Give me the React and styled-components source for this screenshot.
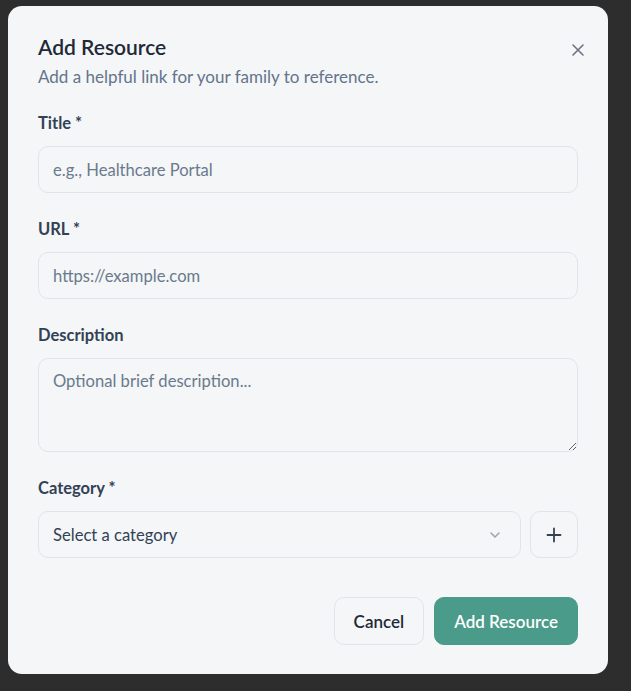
import React from 'react';
import styled, { createGlobalStyle } from 'styled-components';

const GlobalStyle = createGlobalStyle`
  html, body {
    margin: 0;
    padding: 0;
    background: #2d2d2d;
    font-family: Lato, "Open Sans", sans-serif;
  }
  * { box-sizing: border-box; }
`;

const Backdrop = styled.div`
  min-height: 691px;
  padding: 6px 23px 18px 8px;
  background: #2d2d2d;
`;

const Dialog = styled.div`
  position: relative;
  width: 600px;
  background: #f4f6f8;
  border-radius: 14px;
  padding: 28px 30px 29px;
`;

const CloseButton = styled.button`
  position: absolute;
  top: 34px;
  right: 20px;
  width: 20px;
  height: 20px;
  padding: 0;
  border: none;
  background: none;
  color: #6b7280;
  display: flex;
  align-items: center;
  justify-content: center;
`;

const Title = styled.h2`
  margin: 0;
  font-size: 21px;
  font-weight: 600;
  color: #1f2937;
  line-height: 26px;
`;

const Subtitle = styled.p`
  margin: 6px 0 0;
  font-size: 17px;
  color: #64748b;
  line-height: 22px;
`;

const Form = styled.form`
  display: flex;
  flex-direction: column;
  gap: 25px;
  margin-top: 24px;
`;

const Field = styled.div`
  display: flex;
  flex-direction: column;
  gap: 12px;
`;

const Label = styled.label`
  font-size: 16.5px;
  font-weight: 700;
  color: #334155;
  line-height: 22px;
`;

const Input = styled.input`
  height: 47px;
  width: 100%;
  padding: 0 14px;
  border: 1px solid #e1e5eb;
  border-radius: 10px;
  background: #f4f6f8;
  font: inherit;
  font-size: 16.6px;
  color: #334155;
  &::placeholder { color: #6b7a8c; }
`;

const TextArea = styled.textarea`
  height: 94px;
  width: 100%;
  padding: 12px 14px;
  border: 1px solid #e1e5eb;
  border-radius: 10px;
  background: #f4f6f8;
  font: inherit;
  font-size: 16.6px;
  resize: vertical;
  &::placeholder { color: #6b7a8c; }
`;

const SelectRow = styled.div`
  display: flex;
  gap: 9px;
`;

const Select = styled.div`
  flex: 1;
  height: 47px;
  display: flex;
  align-items: center;
  justify-content: space-between;
  padding: 0 18px 0 14px;
  border: 1px solid #e1e5eb;
  border-radius: 10px;
  font-size: 16.6px;
  color: #334155;
`;

const IconButton = styled.button`
  width: 48px;
  height: 47px;
  padding: 0;
  border: 1px solid #e1e5eb;
  border-radius: 10px;
  background: #f4f6f8;
  color: #374151;
  display: flex;
  align-items: center;
  justify-content: center;
`;

const Footer = styled.div`
  display: flex;
  justify-content: flex-end;
  gap: 10px;
  margin-top: 14px;
`;

const Button = styled.button`
  height: 48px;
  padding: 0 19px;
  border-radius: 10px;
  font: inherit;
  font-size: 17px;
  font-weight: 600;
  border: 1px solid ${p => (p.$primary ? '#4a9b8a' : '#e1e5eb')};
  background: ${p => (p.$primary ? '#4a9b8a' : '#f4f6f8')};
  color: ${p => (p.$primary ? '#ffffff' : '#1f2937')};
`;

export default function App() {
  return (
    <>
      <GlobalStyle />
      <Backdrop>
        <Dialog>
          <CloseButton aria-label="Close">
            <svg width="14" height="14" viewBox="0 0 14 14" fill="none" stroke="currentColor" strokeWidth="1.6" strokeLinecap="round">
              <path d="M2 2l10 10M12 2L2 12" />
            </svg>
          </CloseButton>
          <Title>Add Resource</Title>
          <Subtitle>Add a helpful link for your family to reference.</Subtitle>
          <Form>
            <Field>
              <Label>Title *</Label>
              <Input placeholder="e.g., Healthcare Portal" />
            </Field>
            <Field>
              <Label>URL *</Label>
              <Input placeholder="https://example.com" />
            </Field>
            <Field>
              <Label>Description</Label>
              <TextArea placeholder="Optional brief description..." />
            </Field>
            <Field>
              <Label>Category *</Label>
              <SelectRow>
                <Select>
                  <span>Select a category</span>
                  <svg width="14" height="14" viewBox="0 0 14 14" fill="none" stroke="#9ca3af" strokeWidth="1.5" strokeLinecap="round" strokeLinejoin="round">
                    <path d="M3 5l4 4 4-4" />
                  </svg>
                </Select>
                <IconButton type="button" aria-label="Add category">
                  <svg width="16" height="16" viewBox="0 0 16 16" fill="none" stroke="currentColor" strokeWidth="1.8" strokeLinecap="round">
                    <path d="M8 1.5v13M1.5 8h13" />
                  </svg>
                </IconButton>
              </SelectRow>
            </Field>
            <Footer>
              <Button type="button">Cancel</Button>
              <Button type="button" $primary>Add Resource</Button>
            </Footer>
          </Form>
        </Dialog>
      </Backdrop>
    </>
  );
}
